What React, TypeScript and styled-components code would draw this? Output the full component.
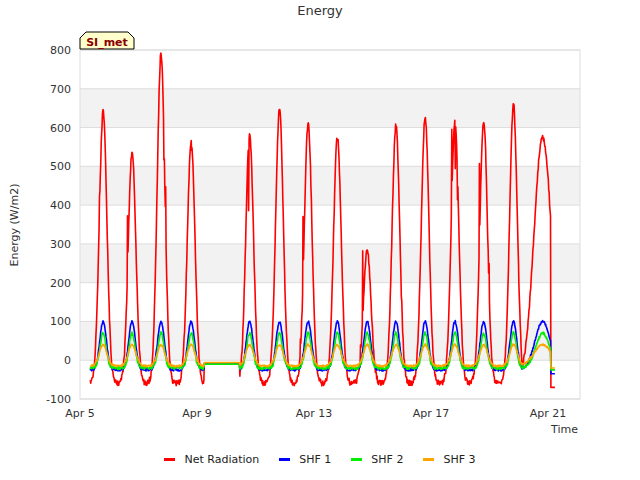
import React from 'react'
import styled, { createGlobalStyle } from 'styled-components'

const GlobalStyle = createGlobalStyle`
  html, body { margin: 0; padding: 0; background: #fff; }
  body { font-family: "DejaVu Sans", sans-serif; }
`

const Page = styled.div`
  width: 640px;
  height: 480px;
  display: flex;
  flex-direction: column;
  align-items: center;
  color: #333;
`

const Title = styled.div`
  font-size: 13px;
  color: #333;
  margin-top: 3px;
  height: 17px;
`

const Legend = styled.div`
  display: flex;
  gap: 20px;
  font-size: 11px;
  color: #222;
  margin-top: 13px;
`

const LegendItem = styled.div`
  display: flex;
  align-items: center;
  gap: 9px;
`

const Swatch = styled.span<{ $color: string }>`
  width: 11px;
  height: 3px;
  background: ${({ $color }) => $color};
`

// plot geometry
const X0 = 80, X1 = 580, Y0 = 50, Y1 = 399
const yOf = (v: number) => Y1 - ((v + 100) / 900) * (Y1 - Y0)
const xOf = (d: number) => X0 + d * 29.25

const peaks = [
  [0.79, 640], [1.78, 535], [2.77, 790], [3.8, 565], [5.8, 585], [6.82, 645],
  [7.8, 610], [8.8, 575], [9.82, 285], [10.8, 605], [11.8, 625], [12.82, 615],
  [13.8, 620], [14.82, 660], [15.82, 575],
]

let seed = 7
const rnd = () => {
  seed = (seed * 16807) % 2147483647
  return seed / 2147483647
}

type Series = { color: string; pts: string }

function build(): Series[] {
  const nr: string[] = [], s1: string[] = [], s2: string[] = [], s3: string[] = []
  for (let d = 0.35; d <= 16.25; d += 0.015) {
    const gap = d > 4.25 && d < 5.45
    let sun = 0
    let p = 0
    for (const [c, v] of peaks) {
      const w = c > 15 ? 0.3 : 0.13
      const g = Math.exp(-((d - c) ** 2) / (2 * w * w))
      if (g > sun) { sun = g; p = v }
    }
    let n: number, a: number, b: number, e: number
    if (gap) {
      n = -10; a = -8; b = -10; e = -6
    } else if (d > 16.1) {
      n = -70; a = -35; b = -25; e = -20
    } else {
      const spike = rnd() < 0.03 && sun > 0.1 ? (rnd() - 0.5) * 400 : 0
      n = -60 + (p + 60) * sun + spike + (rnd() - 0.5) * 15
      const lag = Math.max(0, sun)
      a = -25 + 125 * Math.pow(lag, 1.3) + (rnd() - 0.5) * 6
      b = -20 + 90 * Math.pow(lag, 1.6) + (rnd() - 0.5) * 8
      e = -15 + 55 * lag + (rnd() - 0.5) * 5
    }
    const x = xOf(d).toFixed(1)
    nr.push(`${x},${yOf(Math.min(800, n)).toFixed(1)}`)
    s1.push(`${x},${yOf(a).toFixed(1)}`)
    s2.push(`${x},${yOf(b).toFixed(1)}`)
    s3.push(`${x},${yOf(e).toFixed(1)}`)
  }
  return [
    { color: '#ff0000', pts: nr.join(' ') },
    { color: '#0000ff', pts: s1.join(' ') },
    { color: '#00ee00', pts: s2.join(' ') },
    { color: '#ffa500', pts: s3.join(' ') },
  ]
}

const series = build()
const ticks = [800, 700, 600, 500, 400, 300, 200, 100, 0, -100]
const dates = ['Apr 5', 'Apr 9', 'Apr 13', 'Apr 17', 'Apr 21']

const Chart: React.FC = () => (
  <svg width={640} height={420} viewBox="0 20 640 420" style={{ display: 'block' }}>
    {[700, 500, 300, 100].map(v => (
      <rect key={v} x={X0} y={yOf(v)} width={X1 - X0} height={yOf(v - 100) - yOf(v)} fill="#f2f2f2" />
    ))}
    {ticks.map(v => (
      <g key={v}>
        <line x1={X0} x2={X1} y1={yOf(v)} y2={yOf(v)} stroke="#ddd" />
        <text x={71} y={yOf(v) + 4} fontSize={11} textAnchor="end" fill="#333">{v}</text>
      </g>
    ))}
    <rect x={X0} y={Y0} width={X1 - X0} height={Y1 - Y0} fill="none" stroke="#ddd" />
    {dates.map((t, i) => (
      <text key={t} x={X0 + i * 117} y={417} fontSize={11} textAnchor="middle" fill="#333">{t}</text>
    ))}
    <text x={578} y={433} fontSize={11} textAnchor="end" fill="#333">Time</text>
    <text transform="translate(18,225) rotate(-90)" fontSize={11} textAnchor="middle" fill="#333">Energy (W/m2)</text>
    {series.map(s => (
      <polyline key={s.color} points={s.pts} fill="none" stroke={s.color} strokeWidth={1.6} strokeLinejoin="round" />
    ))}
    <path d="M80,49 V38 L86,32 H128 L134,38 V49 Z" fill="#ffffcc" stroke="#000" />
    <text x={107} y={46} fontSize={11} fontWeight="bold" textAnchor="middle" fill="#8b0000">SI_met</text>
  </svg>
)

export default function App() {
  return (
    <Page>
      <GlobalStyle />
      <Title>Energy</Title>
      <Chart />
      <Legend>
        {[['#ff0000', 'Net Radiation'], ['#0000ff', 'SHF 1'], ['#00ee00', 'SHF 2'], ['#ffa500', 'SHF 3']].map(([c, l]) => (
          <LegendItem key={l}><Swatch $color={c} />{l}</LegendItem>
        ))}
      </Legend>
    </Page>
  )
}
